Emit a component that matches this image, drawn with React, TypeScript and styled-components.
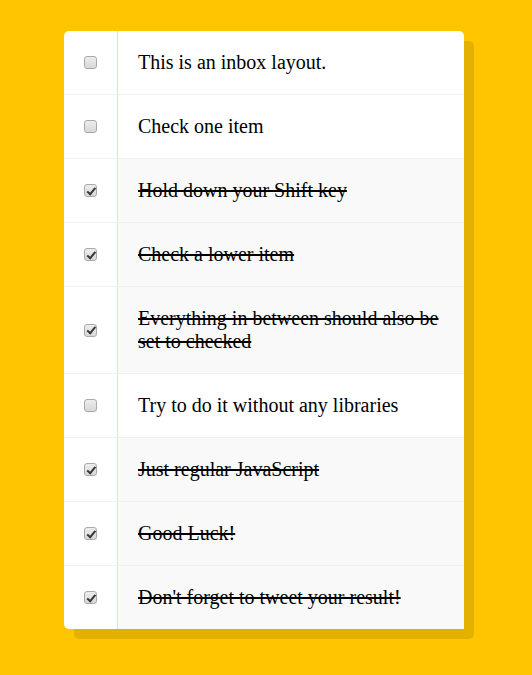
import React from "react";
import styled, { createGlobalStyle } from "styled-components";

const Global = createGlobalStyle`
  html { background: #ffc600; font-family: "Liberation Serif", serif; }
  body { margin: 0; }
`;

const Page = styled.div`
  padding: 31px 0 40px 64px;
`;

const Inbox = styled.div`
  width: 400px;
  background: white;
  border-radius: 5px;
  box-shadow: 10px 10px 0 rgba(0, 0, 0, 0.1);
`;

const Item = styled.label`
  display: flex;
  align-items: center;
  border-bottom: 1px solid #f1f1f1;
  &:last-child { border-bottom: 0; }
`;

const Box = styled.input`
  appearance: none;
  -webkit-appearance: none;
  position: relative;
  box-sizing: border-box;
  margin: 20px;
  width: 13px;
  height: 13px;
  flex: none;
  border: 1px solid #a9a9a9;
  border-radius: 3px;
  background: linear-gradient(#ededed, #d8d8d8);
  &:checked::after {
    content: "";
    position: absolute;
    left: 3.5px;
    top: 0.5px;
    width: 3px;
    height: 6.5px;
    border-right: 2.4px solid #383838;
    border-bottom: 2.4px solid #383838;
    transform: rotate(40deg);
  }
  &:checked + p {
    background: #f9f9f9;
    text-decoration: line-through;
  }
`;

const Text = styled.p`
  margin: 0;
  padding: 20px;
  flex: 1;
  font-family: "Liberation Serif", serif;
  font-size: 20px;
  line-height: 23px;
  font-weight: 400;
  color: #000;
  border-left: 1px solid #d1e2ff;
`;

const items: [string, boolean][] = [
  ["This is an inbox layout.", false],
  ["Check one item", false],
  ["Hold down your Shift key", true],
  ["Check a lower item", true],
  ["Everything in between should also be set to checked", true],
  ["Try to do it without any libraries", false],
  ["Just regular JavaScript", true],
  ["Good Luck!", true],
  ["Don't forget to tweet your result!", true],
];

export default function App() {
  return (
    <Page>
      <Global />
      <Inbox>
        {items.map(([t, c], i) => (
          <Item key={i}>
            <Box type="checkbox" defaultChecked={c} />
            <Text>{t}</Text>
          </Item>
        ))}
      </Inbox>
    </Page>
  );
}
